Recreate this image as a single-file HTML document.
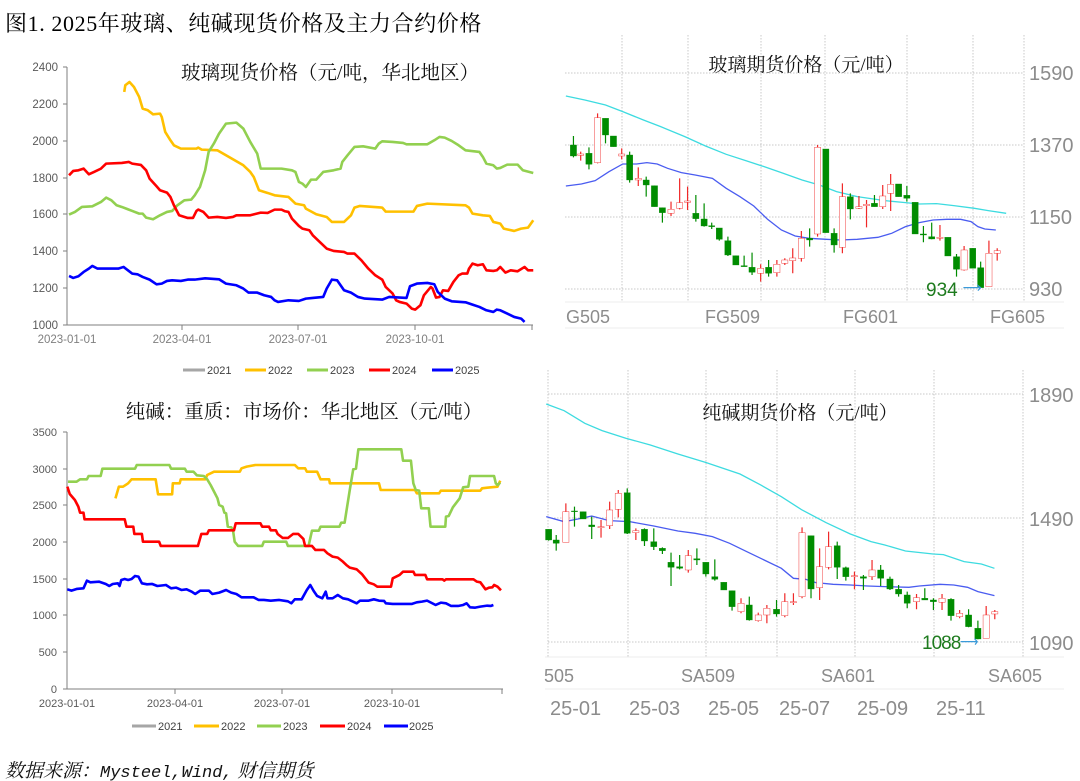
<!DOCTYPE html>
<html><head><meta charset="utf-8"><style>
html,body{margin:0;padding:0;background:#fff;}
svg{display:block;}
.ns{vector-effect:non-scaling-stroke;fill:none;}
.r{fill:#fff;stroke:#f02828;stroke-width:1.3;vector-effect:non-scaling-stroke;}
.g{fill:#008c00;stroke:#008c00;stroke-width:1;vector-effect:non-scaling-stroke;}
.wr{stroke:#f02828;stroke-width:1.2;fill:none;vector-effect:non-scaling-stroke;}
.wg{stroke:#008c00;stroke-width:1.2;fill:none;vector-effect:non-scaling-stroke;}
.grid{stroke:#c8c8c8;stroke-width:1;stroke-dasharray:1.5 1.5;fill:none;}
.lab{font-family:"Liberation Sans",sans-serif;font-size:11.5px;fill:#595959;}
.rl{font-family:"Liberation Sans",sans-serif;font-size:20px;fill:#8c8c8c;}
.tt{font-family:"Liberation Serif","Noto Serif CJK SC",serif;font-size:19px;fill:#111;}
</style></head><body>
<svg width="1080" height="781" viewBox="0 0 1080 781" xmlns="http://www.w3.org/2000/svg">
<rect width="1080" height="781" fill="#fff"/>
<text x="5" y="31" style="font-family:'Liberation Serif','Noto Serif CJK SC',serif;font-size:22px;letter-spacing:0.6px;fill:#000;">图1. 2025年玻璃、纯碱现货价格及主力合约价格</text>

<!-- ============ Top-left chart ============ -->
<text x="330" y="79" text-anchor="middle" class="tt" style="font-size:19.5px">玻璃现货价格（元/吨，华北地区）</text>
<g stroke="#7f7f7f" stroke-width="1" fill="none">
<path d="M67 67V325H533"/>
<path d="M63 67H67M63 104H67M63 141H67M63 178H67M63 214H67M63 251H67M63 288H67M63 325H67"/>
<path d="M182 325V330M298 325V330M415 325V330M532 325V330"/>
</g>
<g class="lab" text-anchor="end">
<text x="58" y="71">2400</text><text x="58" y="108">2200</text><text x="58" y="145">2000</text><text x="58" y="182">1800</text><text x="58" y="218">1600</text><text x="58" y="255">1400</text><text x="58" y="292">1200</text><text x="58" y="329">1000</text>
</g>
<g class="lab" text-anchor="middle" style="fill:#7f7f7f">
<text x="67" y="343">2023-01-01</text><text x="182" y="343">2023-04-01</text><text x="298" y="343">2023-07-01</text><text x="415" y="343">2023-10-01</text>
</g>
<g transform="translate(0.3,40.3) scale(0.3472,0.3333)" stroke-width="2.6" stroke-linejoin="round">
<polyline class="ns" stroke="#ffc000" points="357,155 360,135 372,125 385,140 400,170 410,205 425,210 440,222 460,220 465,230 475,275 490,300 500,315 520,325 565,325 570,322 580,328 625,330 650,345 700,375 720,395 730,410 745,450 770,458 790,465 830,470 850,490 875,495 880,505 910,522 940,530 955,545 990,545 1010,525 1020,502 1035,497 1100,502 1110,514 1190,514 1200,497 1230,490 1340,495 1350,502 1360,520 1390,525 1410,527 1420,545 1440,550 1450,565 1480,572 1500,565 1520,562 1535,540"/>
<polyline class="ns" stroke="#92d050" points="198,523 215,515 235,500 265,498 290,485 305,472 320,480 335,495 350,500 380,512 400,520 410,520 420,532 440,537 460,525 480,515 495,512 510,495 530,480 550,478 560,465 575,440 590,390 600,335 615,310 630,280 650,250 680,247 700,265 720,305 740,340 750,385 810,385 840,390 850,395 860,425 870,430 880,440 895,418 910,418 930,395 960,390 980,385 985,365 1000,345 1020,320 1045,318 1080,325 1090,310 1100,303 1130,305 1160,308 1170,312 1230,312 1250,300 1265,290 1280,292 1300,302 1320,315 1340,330 1380,335 1390,350 1400,370 1420,375 1430,385 1440,383 1460,373 1490,373 1505,390 1535,398"/>
<polyline class="ns" stroke="#ff0000" points="198,405 210,392 225,390 240,385 255,402 270,395 290,385 305,370 350,368 370,365 380,370 405,374 420,390 430,415 450,438 460,450 480,457 490,470 500,495 515,525 540,533 555,533 565,512 570,508 585,515 600,532 625,530 650,533 670,530 680,525 720,525 750,517 770,518 790,508 810,508 820,513 830,515 840,535 860,557 870,565 890,570 900,585 920,605 940,625 960,632 990,635 1000,640 1020,640 1040,660 1060,685 1080,705 1100,718 1110,740 1130,760 1140,780 1150,785 1170,790 1185,805 1195,808 1210,795 1220,765 1240,740 1245,745 1255,772 1265,770 1275,750 1290,752 1305,725 1320,705 1330,700 1345,700 1350,685 1360,670 1375,675 1390,672 1400,690 1420,692 1430,690 1440,680 1455,697 1470,690 1490,693 1510,680 1520,690 1535,690"/>
<polyline class="ns" stroke="#0000ff" points="198,707 210,713 225,708 240,695 255,685 265,677 280,685 340,685 355,680 370,692 380,700 395,702 410,710 430,718 450,732 465,730 480,722 495,720 520,722 540,718 560,718 590,714 630,717 650,730 680,735 700,745 715,757 740,757 760,765 780,770 790,780 800,785 830,780 860,782 880,775 900,773 930,770 940,745 955,718 970,720 980,735 990,750 1010,757 1030,770 1050,775 1100,778 1120,770 1170,773 1180,738 1200,730 1230,728 1250,732 1260,755 1280,775 1300,783 1340,786 1360,793 1380,800 1400,810 1420,815 1430,808 1440,810 1460,820 1480,830 1500,835 1510,845"/>
</g>
<g stroke-width="3">
<path d="M183 370H205" stroke="#a6a6a6"/><path d="M245 370H266" stroke="#ffc000"/><path d="M307 370H328" stroke="#92d050"/><path d="M369 370H390" stroke="#ff0000"/><path d="M432 370H453" stroke="#0000ff"/>
</g>
<g class="lab" style="font-size:11px;fill:#404040">
<text x="207" y="374">2021</text><text x="268" y="374">2022</text><text x="330" y="374">2023</text><text x="392" y="374">2024</text><text x="455" y="374">2025</text>
</g>

<!-- ============ Bottom-left chart ============ -->
<text x="304" y="418" text-anchor="middle" class="tt" style="font-size:19.5px">纯碱：重质：市场价：华北地区（元/吨）</text>
<g stroke="#7f7f7f" stroke-width="1" fill="none">
<path d="M67 432V689H503"/>
<path d="M63 432H67M63 469H67M63 505H67M63 542H67M63 579H67M63 615H67M63 652H67M63 689H67"/>
<path d="M175 689V694M282 689V694M392 689V694M502 689V694"/>
</g>
<g class="lab" text-anchor="end" style="font-size:11px">
<text x="57" y="436">3500</text><text x="57" y="473">3000</text><text x="57" y="509">2500</text><text x="57" y="546">2000</text><text x="57" y="583">1500</text><text x="57" y="619">1000</text><text x="57" y="656">500</text><text x="57" y="693">0</text>
</g>
<g class="lab" text-anchor="middle" style="font-size:11px">
<text x="67" y="707">2023-01-01</text><text x="175" y="707">2023-04-01</text><text x="282" y="707">2023-07-01</text><text x="392" y="707">2023-10-01</text>
</g>
<g transform="translate(-0.7,390) scale(0.3436,0.3333)" stroke-width="2.6" stroke-linejoin="round">
<polyline class="ns" stroke="#ffc000" points="338,325 348,290 360,290 375,280 385,268 455,268 462,313 503,313 505,280 525,280 528,268 600,268 605,255 625,245 700,245 705,235 720,230 745,225 860,225 870,235 890,235 895,245 925,245 935,268 960,268 962,280 1105,280 1110,300 1210,300 1215,310 1280,310 1285,302 1400,302 1405,295 1420,293 1450,290 1458,272"/>
<polyline class="ns" stroke="#92d050" points="200,275 225,275 235,268 255,268 260,258 295,258 300,236 395,236 400,225 495,225 500,236 540,236 545,245 565,245 575,256 595,258 605,268 615,285 625,305 635,325 640,345 650,350 655,368 660,370 665,410 675,412 680,420 685,455 695,468 765,468 770,455 835,455 840,468 900,468 905,445 910,422 930,422 935,410 990,410 995,398 1005,398 1010,365 1020,300 1030,238 1038,236 1045,178 1170,178 1175,212 1198,212 1205,280 1212,300 1222,302 1228,355 1250,355 1255,410 1298,410 1300,380 1308,378 1320,352 1340,325 1350,292 1365,290 1370,258 1440,258 1445,280 1450,285 1458,278"/>
<polyline class="ns" stroke="#ff0000" points="198,290 205,312 220,330 230,350 235,368 245,368 248,388 365,388 370,410 390,410 393,432 415,432 418,455 465,455 470,468 578,468 588,432 605,432 610,421 683,421 688,400 760,400 765,410 785,410 790,421 805,421 810,432 825,444 840,444 855,432 870,432 885,447 890,468 910,468 920,480 945,480 955,490 970,500 985,503 1000,515 1010,525 1020,533 1040,538 1055,552 1065,565 1075,578 1090,583 1100,590 1140,590 1145,565 1165,555 1175,545 1205,545 1210,555 1240,555 1245,568 1290,568 1295,572 1300,568 1380,568 1390,575 1400,577 1415,598 1425,593 1435,592 1440,585 1450,590 1460,601"/>
<polyline class="ns" stroke="#0000ff" points="198,598 210,602 225,597 245,595 255,572 265,577 290,575 310,582 320,588 330,582 345,580 350,588 355,570 365,567 375,570 385,567 395,558 405,560 415,580 430,583 445,582 460,588 485,585 500,595 515,593 530,600 545,598 560,605 570,612 585,602 610,602 620,612 640,608 660,600 675,608 690,612 705,622 740,622 755,630 770,630 790,632 815,630 840,634 850,640 860,628 880,628 895,600 905,585 915,603 925,618 940,625 950,605 955,625 970,625 985,615 1000,625 1015,628 1040,640 1050,632 1075,632 1090,628 1105,632 1120,633 1125,640 1145,642 1200,642 1215,637 1230,635 1245,632 1270,645 1285,638 1300,640 1315,648 1335,648 1350,645 1360,640 1370,652 1385,653 1400,650 1420,647 1430,648 1438,645"/>
</g>
<g stroke-width="3">
<path d="M132 726H156" stroke="#a6a6a6"/><path d="M194 726H219" stroke="#ffc000"/><path d="M257 726H281" stroke="#92d050"/><path d="M320 726H345" stroke="#ff0000"/><path d="M384 726H408" stroke="#0000ff"/>
</g>
<g class="lab" style="font-size:11px;fill:#404040">
<text x="158" y="730">2021</text><text x="221" y="730">2022</text><text x="283" y="730">2023</text><text x="347" y="730">2024</text><text x="409" y="730">2025</text>
</g>
<text x="5" y="777" style="font-family:'Liberation Serif','Noto Serif CJK SC',serif;font-size:19px;font-style:italic;fill:#111;">数据来源：<tspan style="font-family:'Liberation Mono',monospace;font-size:17px">Mysteel,Wind,</tspan> 财信期货</text>

<!-- ============ Top-right chart ============ -->
<g class="grid">
<path d="M565 73H1024M565 145H1024M565 217H1024M565 289H1024"/>
<path d="M622 35V302M688 35V302M761 35V302M825 35V302M907 35V302M973 35V302M1024 35V302"/>
</g>
<path d="M565 302H1064M565 328H1064" stroke="#ececec" stroke-width="1"/>
<text x="806" y="71" text-anchor="middle" class="tt">玻璃期货价格（元/吨）</text>
<g class="rl"><text x="1029" y="80">1590</text><text x="1029" y="152">1370</text><text x="1029" y="224">1150</text><text x="1029" y="296">930</text></g>
<g class="rl" style="font-size:18px"><text x="566" y="323">G505</text><text x="705" y="323">FG509</text><text x="843" y="323">FG601</text><text x="990" y="323">FG605</text></g>
<g transform="translate(540,30) scale(0.3448,0.3333)">
<polyline class="ns" stroke="#3ddbe0" stroke-width="1.3" points="75,198 130,210 190,225 240,245 300,270 350,290 420,320 480,348 540,373 600,393 650,410 700,428 760,450 810,465 860,485 920,500 1000,512 1060,518 1100,522 1150,521 1200,527 1260,535 1300,542 1352,550"/>
<polyline class="ns" stroke="#4a5cf0" stroke-width="1.3" points="75,468 120,462 160,452 200,425 240,402 280,402 310,398 340,402 370,415 410,428 450,435 500,445 540,475 580,500 620,528 660,568 700,600 740,618 780,625 830,628 870,630 920,628 980,622 1020,610 1060,590 1100,578 1140,570 1180,568 1220,568 1250,575 1270,590 1290,597 1322,600"/>
<path class="wr" d="M118 365V392M167 250V400M237 355V388M285 412V468M380 515V558M405 445V538M428 470V540M640 703V755M687 690V740M710 685V705M733 655V730M758 603V695M805 345V620M877 460V670M925 498V537M947 510V592M994 465V537M1017 432V543M1160 585V632M1230 648V722M1302 632V770M1326 655V692"/>
<path class="wg" d="M97 318V382M142 352V418M190 265V340M213 318V350M260 365V458M308 440V500M332 467V530M355 533V578M452 495V575M476 520V590M498 578V597M520 594V632M545 620V678M568 677V705M592 677V710M615 668V735M663 690V740M782 595V650M829 357V608M853 595V668M900 490V568M970 495V530M1040 462V500M1064 468V515M1088 517V612M1112 588V637M1136 578V628M1183 622V678M1208 672V740M1255 655V715M1278 695V773"/>
<g class="r">
<rect x="109" y="372" width="18" height="4"/><rect x="158" y="263" width="18" height="135"/><rect x="228" y="372" width="18" height="6"/><rect x="276" y="445" width="18" height="5"/><rect x="371" y="538" width="18" height="12"/><rect x="396" y="518" width="18" height="17"/><rect x="419" y="513" width="18" height="4"/><rect x="631" y="715" width="18" height="15"/><rect x="678" y="703" width="18" height="25"/><rect x="701" y="690" width="18" height="10"/><rect x="724" y="684" width="18" height="8"/><rect x="749" y="625" width="18" height="60"/><rect x="796" y="352" width="18" height="260"/><rect x="868" y="500" width="18" height="152"/><rect x="916" y="530" width="18" height="5"/><rect x="938" y="523" width="18" height="4"/><rect x="985" y="498" width="18" height="32"/><rect x="1008" y="463" width="18" height="27"/><rect x="1151" y="622" width="18" height="3"/><rect x="1221" y="660" width="18" height="60"/><rect x="1293" y="670" width="18" height="100"/><rect x="1317" y="662" width="18" height="8"/>
</g>
<g class="g">
<rect x="88" y="345" width="18" height="33"/><rect x="133" y="370" width="18" height="33"/><rect x="181" y="265" width="18" height="50"/><rect x="204" y="318" width="18" height="32"/><rect x="251" y="375" width="18" height="75"/><rect x="299" y="450" width="18" height="15"/><rect x="323" y="467" width="18" height="63"/><rect x="346" y="533" width="18" height="15"/><rect x="443" y="550" width="18" height="16"/><rect x="467" y="567" width="18" height="21"/><rect x="489" y="587" width="18" height="3"/><rect x="511" y="594" width="18" height="34"/><rect x="536" y="632" width="18" height="43"/><rect x="559" y="677" width="18" height="28"/><rect x="583" y="707" width="18" height="3"/><rect x="606" y="712" width="18" height="15"/><rect x="654" y="712" width="18" height="18"/><rect x="773" y="625" width="18" height="5"/><rect x="820" y="357" width="18" height="251"/><rect x="844" y="610" width="18" height="35"/><rect x="891" y="500" width="18" height="37"/><rect x="961" y="520" width="18" height="10"/><rect x="1031" y="462" width="18" height="38"/><rect x="1055" y="496" width="18" height="9"/><rect x="1079" y="517" width="18" height="95"/><rect x="1103" y="612" width="18" height="3"/><rect x="1127" y="620" width="18" height="7"/><rect x="1174" y="622" width="18" height="56"/><rect x="1199" y="680" width="18" height="38"/><rect x="1246" y="655" width="18" height="60"/><rect x="1269" y="713" width="18" height="60"/>
</g>
<path class="ns" stroke="#3a9ad9" stroke-width="1.2" d="M1228 773H1278M1268 765L1278 773L1270 782"/>
</g>
<text x="926" y="296" style="font-family:'Liberation Sans',sans-serif;font-size:19px;fill:#1e7b1e;">934</text>

<!-- ============ Bottom-right chart ============ -->
<g class="grid">
<path d="M548 394H1023M548 518H1023M548 642H1023"/>
<path d="M548 370V657M628 370V657M706 370V657M777 370V657M855 370V657M934 370V657M1023 370V657"/>
</g>
<path d="M545 657H1064M545 689H1064" stroke="#ececec" stroke-width="1"/>
<text x="800" y="419" text-anchor="middle" class="tt">纯碱期货价格（元/吨）</text>
<g class="rl"><text x="1029" y="402">1890</text><text x="1029" y="526">1490</text><text x="1029" y="650">1090</text></g>
<g class="rl" style="font-size:18px"><text x="544" y="682">505</text><text x="681" y="682">SA509</text><text x="821" y="682">SA601</text><text x="988" y="682">SA605</text></g>
<g class="rl"><text x="550" y="715">25-01</text><text x="629" y="715">25-03</text><text x="708" y="715">25-05</text><text x="779" y="715">25-07</text><text x="857" y="715">25-09</text><text x="936" y="715">25-11</text></g>
<g transform="translate(540,370) scale(0.3448,0.3333)">
<polyline class="ns" stroke="#3ddbe0" stroke-width="1.3" points="18,102 70,122 130,160 180,182 250,205 320,225 400,252 480,277 580,312 640,345 700,380 760,420 830,458 900,492 960,515 1000,525 1060,543 1140,552 1170,554 1230,575 1280,582 1318,595"/>
<polyline class="ns" stroke="#4a5cf0" stroke-width="1.3" points="18,440 70,455 110,447 150,438 200,452 260,455 330,468 400,483 450,490 500,500 550,520 600,545 650,570 700,595 735,625 770,628 800,638 850,643 900,645 950,648 1000,650 1070,652 1100,648 1160,643 1200,645 1240,652 1270,665 1318,677"/>
<path class="wr" d="M75 400V517M177 450V503M202 395V477M227 360V442M278 475V510M430 540V608M583 685V730M633 728V755M658 705V760M710 670V742M735 670V705M760 472V685M811 535V690M837 485V598M912 605V658M963 570V630M1092 672V718M1166 672V720M1217 720V745M1294 708V805M1319 720V748"/>
<path class="wg" d="M25 478V512M47 495V542M100 410V470M125 425V447M150 440V507M253 355V492M303 475V528M330 475V540M355 532V552M380 548V648M405 555V598M455 535V585M481 577V620M507 568V632M533 637V660M557 662V722M607 680V752M686 690V740M786 497V685M862 515V627M887 590V632M938 615V660M988 585V648M1015 620V660M1040 645V680M1065 665V715M1116 655V690M1141 685V720M1192 685V752M1243 718V772M1270 752V808"/>
<g class="r">
<rect x="66" y="425" width="18" height="92"/><rect x="168" y="470" width="18" height="3"/><rect x="193" y="420" width="18" height="47"/><rect x="218" y="370" width="18" height="48"/><rect x="269" y="482" width="18" height="6"/><rect x="421" y="557" width="18" height="43"/><rect x="574" y="700" width="18" height="25"/><rect x="624" y="735" width="18" height="17"/><rect x="649" y="715" width="18" height="20"/><rect x="701" y="695" width="18" height="42"/><rect x="726" y="695" width="18" height="3"/><rect x="751" y="488" width="18" height="192"/><rect x="802" y="590" width="18" height="63"/><rect x="828" y="530" width="18" height="62"/><rect x="903" y="617" width="18" height="3"/><rect x="954" y="600" width="18" height="20"/><rect x="1083" y="683" width="18" height="12"/><rect x="1157" y="685" width="18" height="12"/><rect x="1208" y="730" width="18" height="10"/><rect x="1285" y="735" width="18" height="70"/><rect x="1310" y="725" width="18" height="7"/>
</g>
<g class="g">
<rect x="16" y="478" width="18" height="32"/><rect x="38" y="510" width="18" height="10"/><rect x="91" y="423" width="18" height="2"/><rect x="116" y="425" width="18" height="22"/><rect x="141" y="465" width="18" height="5"/><rect x="244" y="368" width="18" height="122"/><rect x="294" y="478" width="18" height="35"/><rect x="321" y="515" width="18" height="15"/><rect x="346" y="535" width="18" height="7"/><rect x="371" y="577" width="18" height="15"/><rect x="396" y="590" width="18" height="5"/><rect x="446" y="566" width="18" height="4"/><rect x="472" y="577" width="18" height="35"/><rect x="498" y="620" width="18" height="8"/><rect x="524" y="637" width="18" height="23"/><rect x="548" y="662" width="18" height="48"/><rect x="598" y="705" width="18" height="45"/><rect x="677" y="718" width="18" height="14"/><rect x="777" y="497" width="18" height="160"/><rect x="853" y="527" width="18" height="65"/><rect x="878" y="593" width="18" height="27"/><rect x="929" y="620" width="18" height="5"/><rect x="979" y="600" width="18" height="25"/><rect x="1006" y="627" width="18" height="30"/><rect x="1031" y="658" width="18" height="14"/><rect x="1056" y="675" width="18" height="25"/><rect x="1107" y="685" width="18" height="5"/><rect x="1132" y="690" width="18" height="5"/><rect x="1183" y="688" width="18" height="49"/><rect x="1234" y="735" width="18" height="35"/><rect x="1261" y="775" width="18" height="32"/>
</g>
<path class="ns" stroke="#3a9ad9" stroke-width="1.2" d="M1220 815H1268M1260 806L1268 815L1262 824"/>
</g>
<text x="922" y="649" style="font-family:'Liberation Sans',sans-serif;font-size:19px;fill:#1e7b1e;letter-spacing:-1px;">1088</text>
</svg>
</body></html>
